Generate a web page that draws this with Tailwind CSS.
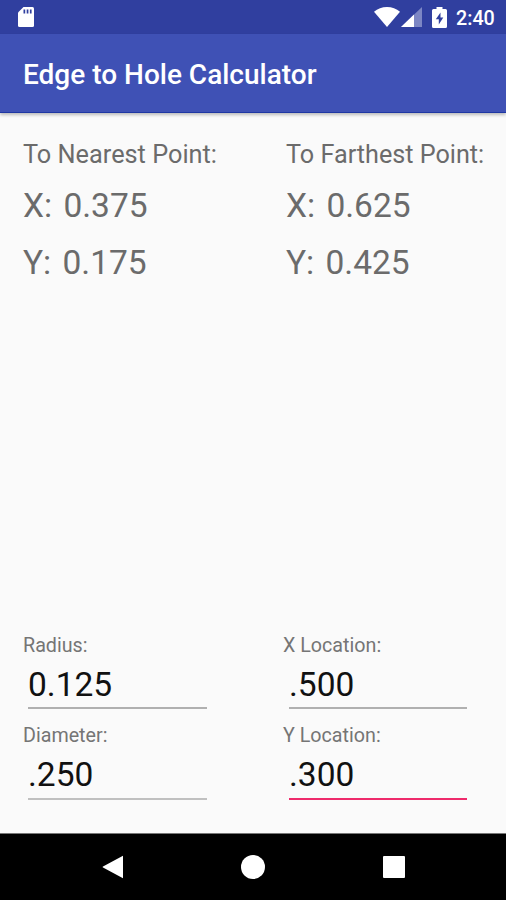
<!DOCTYPE html>
<html lang="en">
<head>
    <meta charset="UTF-8">
    <meta name="viewport" content="width=device-width, initial-scale=1.0">
    <title>Edge to Hole Calculator</title>
    <script src="https://cdn.jsdelivr.net/npm/@tailwindcss/browser@4"></script>
</head>
<body class="bg-[#fafafa] font-['Roboto',sans-serif]">
    <div class="w-[506px] h-[900px] flex flex-col overflow-hidden">
        <!-- Status bar -->
        <div class="h-[34px] shrink-0 bg-[#303f9f] flex items-center text-white">
            <svg class="ml-[17px]" width="18" height="22" viewBox="0 0 18 22">
                <path d="M6.500 1H15.500Q17 1 17 2.500V19.500Q17 21 15.500 21H2.500Q1 21 1 19.500V6.500Z" fill="#fff" />
                <path d="M6.500 3.500h1.700v4H6.500zM9.700 3.500h1.700v4H9.700zM12.900 3.500h1.700v4h-1.700z" fill="#303f9f" />
            </svg>
            <svg class="ml-auto" width="26" height="20" viewBox="0 0 26 20">
                <path d="M0 4.800Q5.500 0 13 0T26 4.800L13 20Z" fill="#fff" />
            </svg>
            <svg class="ml-px" width="21" height="20" viewBox="0 0 21 20">
                <path d="M0 20L21 0V20Z" fill="#7c86c4" />
                <path d="M0 20L13 7.600V20Z" fill="#fff" />
            </svg>
            <svg class="ml-[10px]" width="15" height="21" viewBox="0 0 15 21">
                <path d="M4.500 0h6v2H13.500Q15 2 15 3.500V19.500Q15 21 13.500 21H1.500Q0 21 0 19.500V3.500Q0 2 1.500 2H4.500Z" fill="#fff" />
                <path d="M8.500 5.500L3.800 12.300H6.800V17.500L11.300 10.500H8.500Z" fill="#303f9f" />
            </svg>
            <span class="ml-[9px] mr-[11px] pt-1 w-[39px] text-[19.700px] leading-6 font-medium whitespace-nowrap">2:40</span>
        </div>
        <!-- App bar -->
        <div class="h-[79px] shrink-0 bg-[#3f51b5] flex items-center pl-[23px] pt-[4px] border-b border-[#1f37a3] shadow-[0_2px_3px_rgba(0,0,0,0.25)]">
            <h1 class="text-[28px] leading-8 font-medium text-white whitespace-nowrap">Edge to Hole Calculator</h1>
        </div>
        <!-- Results -->
        <div class="grid grid-cols-[263px_1fr] pl-[23px] pt-[27px] text-[#6b6b6b] text-[33.500px] leading-10 whitespace-nowrap">
            <div>
                <div class="text-[25.300px] leading-[30px]">To Nearest Point:</div>
                <div class="mt-[16px] [word-spacing:3px]">X: 0.375</div>
                <div class="mt-[17px] [word-spacing:3px]">Y: 0.175</div>
            </div>
            <div>
                <div class="text-[25.200px] leading-[30px]">To Farthest Point:</div>
                <div class="mt-[16px] [word-spacing:3px]">X: 0.625</div>
                <div class="mt-[17px] [word-spacing:3px]">Y: 0.425</div>
            </div>
        </div>
        <!-- Inputs -->
        <div class="mt-auto mb-[33px] grid grid-cols-[260px_1fr] gap-y-[15px] pl-[23px]">
            <div>
                <label for="radius" class="block text-[19.700px] leading-6 text-[#757575]">Radius:</label>
                <input type="text" id="radius" value="0.125" class="block mt-[6px] ml-[5px] w-[179px] h-[45px] pb-[3px] border-b-2 border-[#b0b0b0] text-[33.500px] leading-10 text-[#111] outline-none">
            </div>
            <div>
                <label for="xloc" class="block text-[19.700px] leading-6 text-[#757575]">X Location:</label>
                <input type="text" id="xloc" value=".500" class="block mt-[6px] ml-[6px] w-[178px] h-[45px] pb-[3px] border-b-2 border-[#b0b0b0] text-[33.500px] leading-10 text-[#111] outline-none">
            </div>
            <div>
                <label for="diameter" class="block text-[19.700px] leading-6 text-[#757575]">Diameter:</label>
                <input type="text" id="diameter" value=".250" class="block mt-[6px] ml-[5px] w-[179px] h-[46px] pb-[4px] border-b-2 border-[#c0c0c0] text-[33.500px] leading-10 text-[#111] outline-none">
            </div>
            <div>
                <label for="yloc" class="block text-[19.700px] leading-6 text-[#757575]">Y Location:</label>
                <input type="text" id="yloc" value=".300" class="block mt-[6px] ml-[6px] w-[178px] h-[46px] pb-[4px] border-b-2 border-[#ee2a6b] text-[33.500px] leading-10 text-[#111] outline-none">
            </div>
        </div>
        <!-- Navigation bar -->
        <div class="h-[67px] shrink-0 bg-black border-t border-[#777] flex items-center pl-[102px]">
            <svg width="22" height="24" viewBox="0 0 22 24">
                <path d="M21 .8V23.200L1 12.500Q0 12 1 11.500Z" fill="#fff" />
            </svg>
            <div class="ml-[117px] size-6 rounded-full bg-white"></div>
            <div class="ml-[118px] size-[22px] rounded-[1px] bg-white"></div>
        </div>
    </div>
</body>
</html>
